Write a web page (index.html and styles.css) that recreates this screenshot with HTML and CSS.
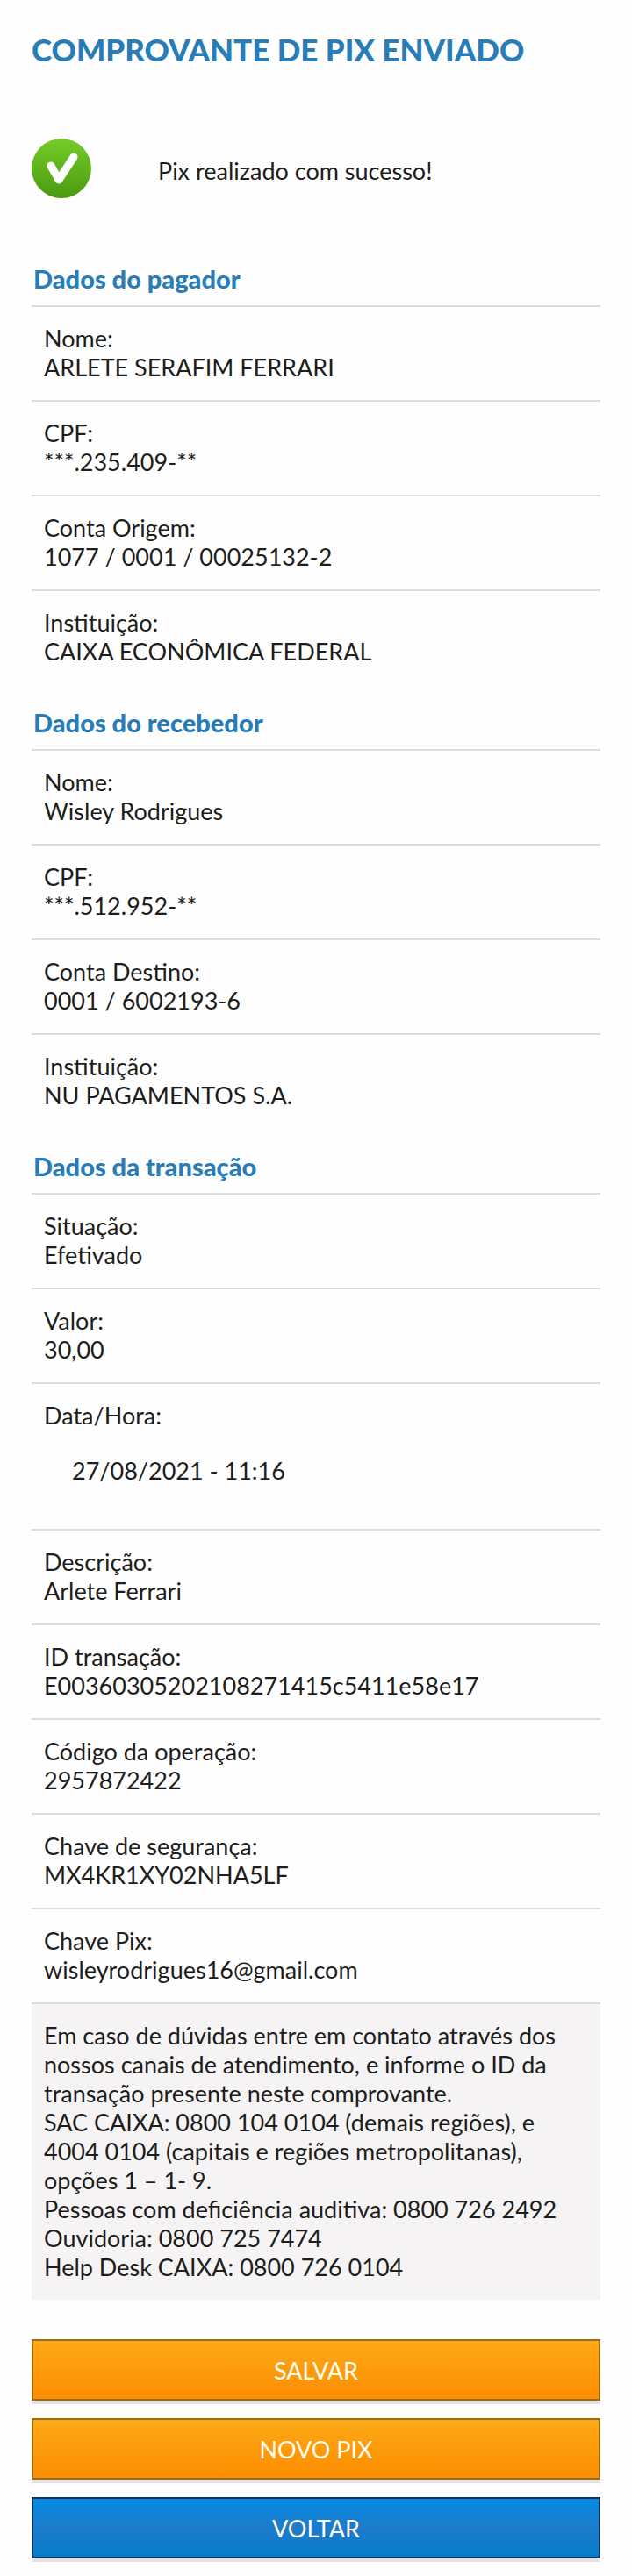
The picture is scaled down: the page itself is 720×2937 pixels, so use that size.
FILE: index.html
```html
<!DOCTYPE html>
<html lang="pt-BR">
<head>
<meta charset="utf-8">
<meta name="viewport" content="width=device-width, initial-scale=1">
<title>Comprovante de Pix enviado</title>
<link rel="stylesheet" href="styles.css">
</head>
<body>
<main class="receipt">
  <h1 class="title">COMPROVANTE DE PIX ENVIADO</h1>

  <div class="status">
    <svg class="status-icon" viewBox="0 0 68 68" aria-hidden="true">
      <defs>
        <linearGradient id="ok" x1="0" y1="0" x2="0" y2="1">
          <stop offset="0" stop-color="#74cc28"/>
          <stop offset="1" stop-color="#4b9a10"/>
        </linearGradient>
      </defs>
      <circle cx="34" cy="34" r="34" fill="url(#ok)"/>
      <path d="M22 31 L31 47 L48 21" fill="none" stroke="#fff" stroke-width="9" stroke-linecap="round" stroke-linejoin="round"/>
    </svg>
    <p class="status-text">Pix realizado com sucesso!</p>
  </div>

  <section>
    <h2 class="heading">Dados do pagador</h2>
    <dl class="rows">
      <div class="row"><dt>Nome:</dt><dd>ARLETE SERAFIM FERRARI</dd></div>
      <div class="row"><dt>CPF:</dt><dd>***.235.409-**</dd></div>
      <div class="row"><dt>Conta Origem:</dt><dd>1077 / 0001 / 00025132-2</dd></div>
      <div class="row"><dt>Instituição:</dt><dd>CAIXA ECONÔMICA FEDERAL</dd></div>
    </dl>
  </section>

  <section>
    <h2 class="heading">Dados do recebedor</h2>
    <dl class="rows">
      <div class="row"><dt>Nome:</dt><dd>Wisley Rodrigues</dd></div>
      <div class="row"><dt>CPF:</dt><dd>***.512.952-**</dd></div>
      <div class="row"><dt>Conta Destino:</dt><dd>0001 / 6002193-6</dd></div>
      <div class="row"><dt>Instituição:</dt><dd>NU PAGAMENTOS S.A.</dd></div>
    </dl>
  </section>

  <section>
    <h2 class="heading">Dados da transação</h2>
    <dl class="rows">
      <div class="row"><dt>Situação:</dt><dd>Efetivado</dd></div>
      <div class="row"><dt>Valor:</dt><dd>30,00</dd></div>
      <div class="row"><dt>Data/Hora:</dt><dd class="datetime">27/08/2021 - 11:16</dd></div>
      <div class="row"><dt>Descrição:</dt><dd>Arlete Ferrari</dd></div>
      <div class="row"><dt>ID transação:</dt><dd>E00360305202108271415c5411e58e17</dd></div>
      <div class="row"><dt>Código da operação:</dt><dd>2957872422</dd></div>
      <div class="row"><dt>Chave de segurança:</dt><dd>MX4KR1XY02NHA5LF</dd></div>
      <div class="row"><dt>Chave Pix:</dt><dd>wisleyrodrigues16@gmail.com</dd></div>
    </dl>
    <p class="row help">Em caso de dúvidas entre em contato através dos<br>
      nossos canais de atendimento, e informe o ID da<br>
      transação presente neste comprovante.<br>
      SAC CAIXA: 0800 104 0104 (demais regiões), e<br>
      4004 0104 (capitais e regiões metropolitanas),<br>
      opções 1 – 1- 9.<br>
      Pessoas com deficiência auditiva: 0800 726 2492<br>
      Ouvidoria: 0800 725 7474<br>
      Help Desk CAIXA: 0800 726 0104</p>
  </section>

  <div class="actions">
    <button class="btn btn-primary" type="button">SALVAR</button>
    <button class="btn btn-primary" type="button">NOVO PIX</button>
    <button class="btn btn-back" type="button">VOLTAR</button>
  </div>
</main>
</body>
</html>
```
FILE: styles.css
```css
* {
  box-sizing: border-box;
}

body {
  margin: 0;
  background: #fefefe;
  color: #1d1d1b;
  font: 400 27px/33px Lato, "Liberation Sans", sans-serif;
}

.receipt {
  padding: 36px 36px 20px;
}

.title {
  margin: 0 0 82px;
  color: #287db7;
  font-size: 35px;
  font-weight: 900;
  line-height: 40px;
}

.status {
  display: flex;
  align-items: center;
  gap: 76px;
  margin-bottom: 48px;
}

.status-icon {
  flex: none;
  width: 68px;
  height: 68px;
}

.status-text {
  margin: 0;
  padding-top: 4px;
}

.heading {
  margin: 0;
  padding: 27px 2px 14px;
  color: #287db7;
  font-size: 29px;
  font-weight: 900;
  line-height: 33px;
}

.rows {
  margin: 0;
}

.row {
  margin: 0;
  padding: 19px 14px 21px;
  border-top: 2px solid #dcdcdc;
}

.row dd {
  margin: 0;
  overflow-wrap: anywhere;
}

.row .datetime {
  margin: 30px 32px 29px;
}

.help {
  background: #f5f3f4;
}

.actions {
  display: grid;
  gap: 20px;
  margin-top: 45px;
}

.btn {
  height: 70px;
  padding: 0 16px;
  border: 2px solid;
  border-radius: 0;
  box-shadow: 0 4px 0 #e4e3e1;
  color: #fffdf0;
  font: inherit;
}

.btn-primary {
  border-color: #9b6a12;
  background: linear-gradient(#fda917, #fd8d00);
}

.btn-back {
  border-color: #102f52;
  background: linear-gradient(#048be2, #1e7bcb 50%, #047dcc);
}
```
